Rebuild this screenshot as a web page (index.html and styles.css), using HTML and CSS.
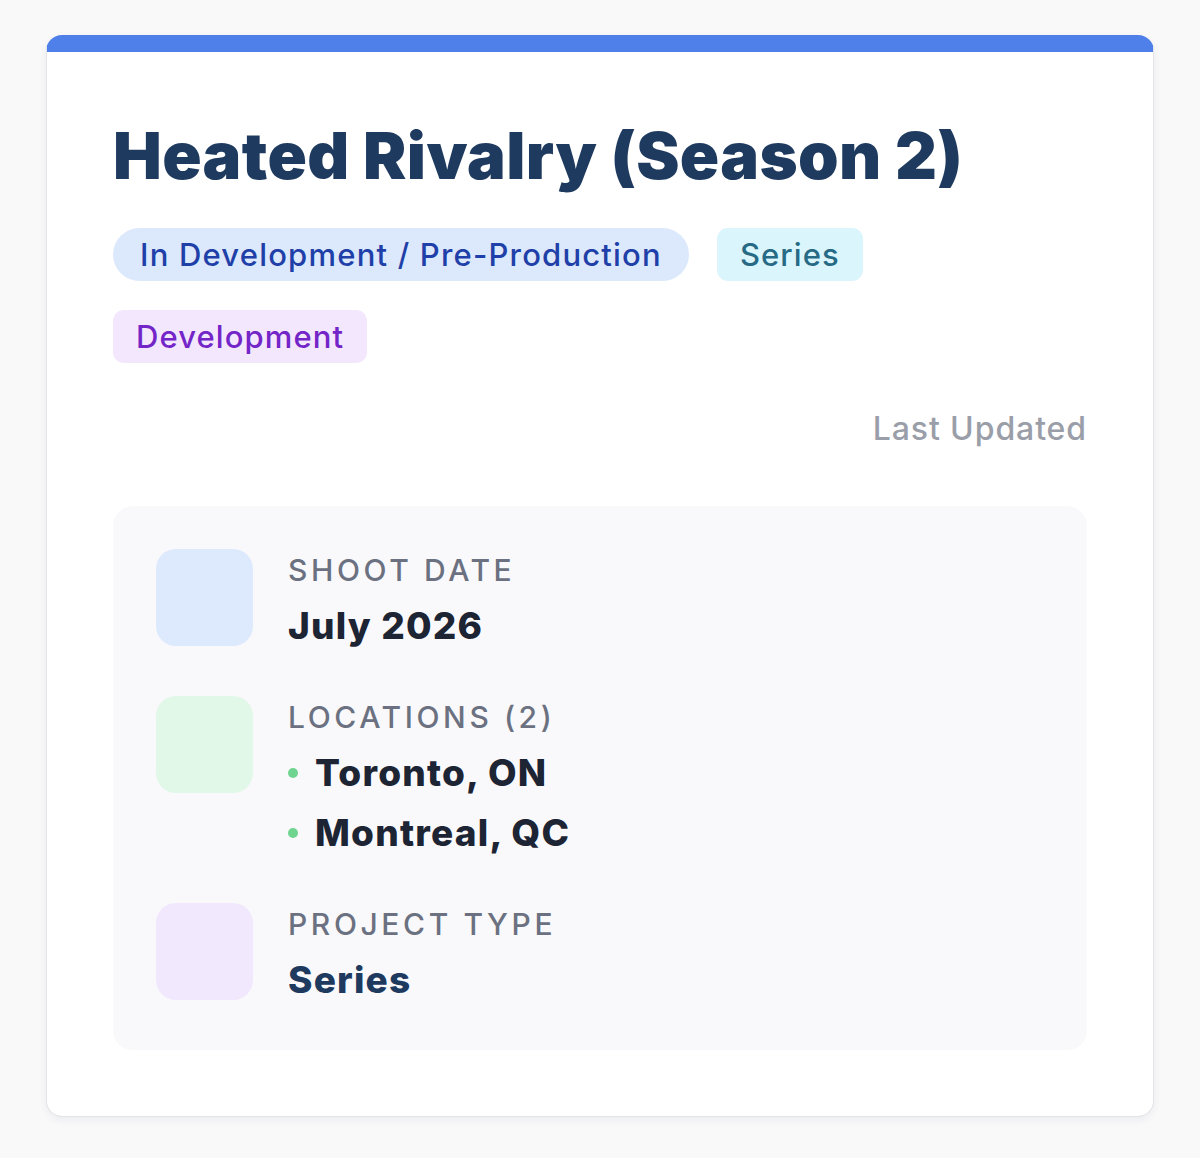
FILE: index.html
```html
<!DOCTYPE html>
<html lang="en">
<head>
<meta charset="utf-8">
<title>Heated Rivalry (Season 2)</title>
<link rel="stylesheet" href="styles.css">
</head>
<body>
<div class="page">
  <article class="card">
    <div class="card-body">
      <h1 class="title">Heated Rivalry (Season 2)</h1>
      <div class="badges">
        <span class="badge badge-status">In Development / Pre-Production</span>
        <span class="badge badge-type">Series</span>
        <span class="badge badge-stage">Development</span>
      </div>
      <div class="updated">Last Updated</div>
      <div class="info">
        <div class="info-row">
          <div class="icon icon-blue"></div>
          <div class="info-text">
            <div class="label">SHOOT DATE</div>
            <div class="value">July 2026</div>
          </div>
        </div>
        <div class="info-row">
          <div class="icon icon-green"></div>
          <div class="info-text">
            <div class="label">LOCATIONS (2)</div>
            <ul class="locations">
              <li class="value loc">Toronto, ON</li>
              <li class="value loc">Montreal, QC</li>
            </ul>
          </div>
        </div>
        <div class="info-row">
          <div class="icon icon-purple"></div>
          <div class="info-text">
            <div class="label">PROJECT TYPE</div>
            <div class="value value-navy">Series</div>
          </div>
        </div>
      </div>
    </div>
  </article>
</div>
</body>
</html>
```

FILE: styles.css
```css
* { box-sizing: border-box; }
html, body { margin: 0; padding: 0; }
body {
  background: #f9f9fa;
  font-family: Inter, "Noto Sans", "Liberation Sans", sans-serif;
  width: 1200px;
  height: 1158px;
}
.page {
  padding: 35px 46px 0 46px;
}
.card {
  background: #ffffff;
  border: 1.5px solid #e3e4e8;
  border-top: 17px solid #4f80ea;
  border-radius: 16px;
  box-shadow: 0 3px 8px rgba(20, 30, 60, 0.06);
}
.card-body {
  padding: 65px 66px 66px 66px;
}
.title {
  margin: 0;
  font-size: 65px;
  line-height: 78px;
  font-weight: 900;
  color: #1e3a5f;
  letter-spacing: 0.4px;
}
.badges {
  display: flex;
  flex-wrap: wrap;
  gap: 29px 28px;
  margin-top: 33px;
}
.badge {
  display: inline-block;
  height: 53px;
  line-height: 53px;
  font-size: 31px;
  font-weight: 500;
  letter-spacing: 1.1px;
  padding: 0 23px;
  border-radius: 11px;
}
.badge-status {
  background: #dce9fc;
  color: #1f40a8;
  border-radius: 27px;
  padding: 0 27px;
  letter-spacing: 1.2px;
}
.badge-type {
  background: #dbf5fc;
  color: #266a86;
}
.badge-stage {
  background: #f3e7fd;
  color: #7325c8;
}
.updated {
  text-align: right;
  font-size: 32px;
  font-weight: 500;
  letter-spacing: 0.9px;
  color: #9a9ea8;
  margin-top: 46px;
  line-height: 40px;
}
.info {
  margin-top: 57px;
  background: #f9f9fb;
  border-radius: 20px;
  padding: 43px 43px 40px 43px;
  display: flex;
  flex-direction: column;
  gap: 40px;
}
.info-row {
  display: flex;
  align-items: flex-start;
  gap: 35px;
}
.icon {
  width: 97px;
  height: 97px;
  border-radius: 20px;
  flex-shrink: 0;
}
.icon-blue { background: #dde9fd; }
.icon-green { background: #e1f8e8; }
.icon-purple { background: #f1e8fd; }
.info-text {
  display: flex;
  flex-direction: column;
}
.label {
  font-size: 30px;
  line-height: 42px;
  font-weight: 500;
  letter-spacing: 3.6px;
  color: #6b7180;
  margin-bottom: 5px;
}
.value {
  font-size: 37px;
  line-height: 60px;
  font-weight: 800;
  letter-spacing: 1.2px;
  color: #1d2433;
}
.value-navy { color: #1e3a5f; }
.locations {
  list-style: none;
  margin: 0;
  padding: 0;
}
.loc {
  display: flex;
  align-items: center;
}
.loc::before {
  content: "";
  width: 10px;
  height: 10px;
  border-radius: 50%;
  background: #6fd48f;
  margin-right: 17px;
  flex-shrink: 0;
}
```
